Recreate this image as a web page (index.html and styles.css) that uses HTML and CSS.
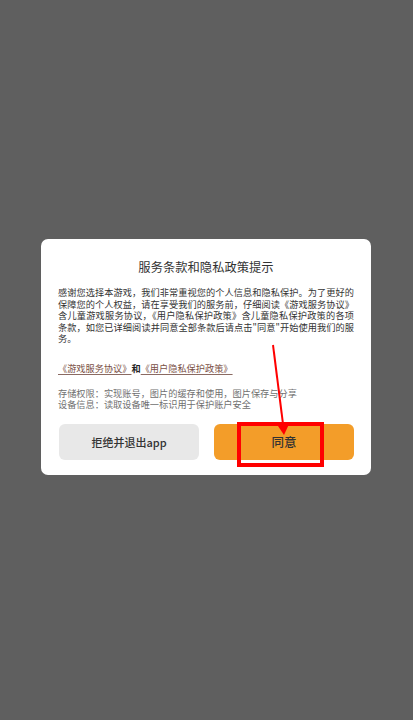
FILE: index.html
```html
<!DOCTYPE html>
<html lang="zh-CN">
<head>
<meta charset="utf-8">
<title>服务条款和隐私政策提示</title>
<link rel="stylesheet" href="styles.css">
</head>
<body>
<div class="screen">
  <div class="dialog">
    <h1 class="title">服务条款和隐私政策提示</h1>
    <p class="intro">
      <span class="line">感谢您选择本游戏，我们非常重视您的个人信息和隐私保护。为了更好的</span>
      <span class="line">保障您的个人权益，请在享受我们的服务前，仔细阅读《游戏服务协议》</span>
      <span class="line">含儿童游戏服务协议，《用户隐私保护政策》含儿童隐私保护政策的各项</span>
      <span class="line">条款，如您已详细阅读并同意全部条款后请点击"同意"开始使用我们的服</span>
      <span class="line-last">务。</span>
    </p>
    <p class="links"><span class="link">《游戏服务协议》</span><span class="and">和</span><span class="link">《用户隐私保护政策》</span></p>
    <div class="perms">
      <p>存储权限：实现账号，图片的缓存和使用，图片保存与分享</p>
      <p>设备信息：读取设备唯一标识用于保护账户安全</p>
    </div>
    <div class="actions">
      <button class="btn btn-reject">拒绝并退出app</button>
      <button class="btn btn-agree">同意</button>
    </div>
    <div class="highlight"></div>
    <svg class="arrow" width="330" height="236" viewBox="0 0 330 236">
      <line x1="232" y1="106" x2="242.4" y2="188" stroke="#ff0000" stroke-width="2"/>
      <polygon points="243,196 236,185.5 248.5,184" fill="#ff0000"/>
    </svg>
  </div>
</div>
</body>
</html>
```
FILE: styles.css
```css
html, body {
  margin: 0;
  padding: 0;
}
body {
  background: #5f5f5f;
  font-family: "Noto Sans CJK SC", "Noto Sans", sans-serif;
}
.screen {
  width: 413px;
  height: 720px;
  padding-top: 239px;
  box-sizing: border-box;
}
.dialog {
  position: relative;
  width: 330px;
  height: 236px;
  margin-left: 41px;
  background: #ffffff;
  border-radius: 7px;
  padding: 20px 17px 15px;
  box-sizing: border-box;
  display: flex;
  flex-direction: column;
}
.title {
  margin: 0;
  font-size: 12.3px;
  line-height: 16px;
  font-weight: normal;
  color: #333333;
  text-align: center;
}
.intro {
  margin: 12px 0 0;
  font-size: 9.2px;
  line-height: 11.5px;
  color: #333333;
}
.line {
  display: block;
  white-space: nowrap;
  text-align: justify;
  text-align-last: justify;
}
.line-last {
  display: block;
}
.links {
  margin: 18px 0 0;
  font-size: 9.2px;
  line-height: 11.5px;
}
.link {
  color: #7a4f45;
  text-decoration: underline;
  text-decoration-color: #8a6a62;
  text-underline-offset: 1.5px;
}
.and {
  color: #222222;
  font-weight: bold;
}
.perms {
  margin-top: 13.5px;
  font-size: 9.2px;
  line-height: 11.5px;
  color: #707070;
}
.perms p {
  margin: 0;
  white-space: nowrap;
}
.actions {
  margin-top: 13px;
  display: flex;
  gap: 15px;
}
.btn {
  flex: 1;
  height: 36px;
  border: none;
  border-radius: 6px;
  font-family: "Noto Sans CJK SC", "Noto Sans", sans-serif;
  color: #333333;
  padding: 0;
}
.btn-reject {
  background: #e8e8e8;
  font-size: 11px;
  font-weight: 500;
  margin-left: 1px;
}
.btn-agree {
  background: #f39d29;
  font-size: 12.5px;
  font-weight: 500;
}
.highlight {
  position: absolute;
  left: 196px;
  top: 183px;
  width: 87px;
  height: 45px;
  border: 4px solid #ff0000;
  box-sizing: border-box;
}
.arrow {
  position: absolute;
  left: 0;
  top: 0;
  overflow: visible;
  pointer-events: none;
}
```
